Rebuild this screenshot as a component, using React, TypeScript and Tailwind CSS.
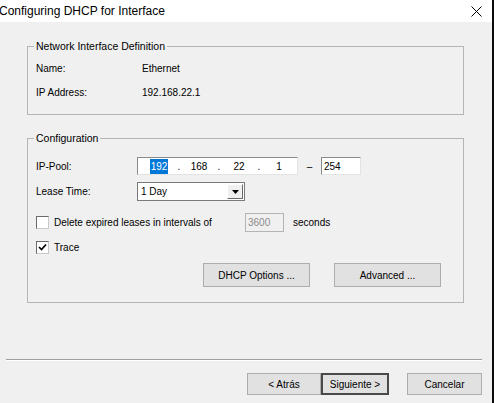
import React from "react";

const font = { fontFamily: '"Liberation Sans", Arial, sans-serif' };

function Check({ checked }: { checked?: boolean }) {
  return (
    <div className="w-[13px] h-[13px] bg-white border border-t-[#6a6a6a] border-l-[#6a6a6a] border-r-[#c8c8c8] border-b-[#c8c8c8] flex items-center justify-center shrink-0">
      {checked && (
        <svg width="9" height="9" viewBox="0 0 9 9">
          <path d="M1 4 L3.5 6.5 L8 1.5" fill="none" stroke="#000" strokeWidth="1.7" />
        </svg>
      )}
    </div>
  );
}

function Btn({ w, children, def }: { w: string; children: React.ReactNode; def?: boolean }) {
  return (
    <div
      className={
        "h-full flex items-center justify-center bg-[#e1e1e1] text-black " +
        w +
        (def ? " border-2 border-[#4a4a4a]" : " border border-[#adadad]")
      }
    >
      {children}
    </div>
  );
}

export default function App() {
  return (
    <div className="w-[494px] h-[403px] flex bg-[#f0f0f0] overflow-hidden text-[10px] text-black" style={font}>
      <div className="w-[492px] flex flex-col">
        <div className="h-[22px] bg-white flex items-center justify-between shrink-0">
          <span className="text-[12px] -ml-[1px] leading-none">Configuring DHCP for Interface</span>
          <svg width="11" height="11" viewBox="0 0 11 11" className="mr-[10px]">
            <path d="M0.5 0.5 L10.5 10.5 M10.5 0.5 L0.5 10.5" stroke="#000" strokeWidth="1" />
          </svg>
        </div>

        <fieldset className="mt-[18px] ml-[27px] w-[437px] h-[75px] border border-[#b5b5b5] px-[8px] shrink-0">
          <legend className="-ml-[2px] px-[2px] text-[10.5px] leading-[12px]">Network Interface Definition</legend>
          <div className="mt-[8px] flex h-[16px] items-center">
            <span className="w-[106px]">Name:</span>
            <span>Ethernet</span>
          </div>
          <div className="mt-[8px] flex h-[16px] items-center">
            <span className="w-[106px]">IP Address:</span>
            <span>192.168.22.1</span>
          </div>
        </fieldset>

        <fieldset className="mt-[17px] ml-[27px] w-[437px] h-[171px] border border-[#b5b5b5] px-[8px] shrink-0">
          <legend className="-ml-[2px] px-[2px] text-[10.5px] leading-[12px]">Configuration</legend>
          <div className="mt-[13px] flex h-[18px] items-center">
            <span className="w-[101px]">IP-Pool:</span>
            <div className="w-[161px] h-[18px] bg-white border border-t-[#8a8a8a] border-l-[#8a8a8a] border-r-[#e3e3e3] border-b-[#e3e3e3] flex items-center pl-[5px]">
              <span className="w-[32px] flex justify-center"><span className="bg-[#0078d7] text-white px-[1px]">192</span></span>
              <span className="w-[8px] text-center">.</span>
              <span className="w-[32px] text-center">168</span>
              <span className="w-[8px] text-center">.</span>
              <span className="w-[32px] text-center">22</span>
              <span className="w-[8px] text-center">.</span>
              <span className="w-[32px] text-center">1</span>
            </div>
            <span className="w-[23px] text-center">–</span>
            <div className="w-[40px] h-[18px] bg-white border border-t-[#8a8a8a] border-l-[#8a8a8a] border-r-[#e3e3e3] border-b-[#e3e3e3] flex items-center pl-[2px]">
              254
            </div>
          </div>
          <div className="mt-[7px] flex h-[19px] items-center">
            <span className="w-[101px]">Lease Time:</span>
            <div className="w-[108px] h-[19px] bg-white border border-[#7a7a7a] flex items-center justify-between">
              <span className="pl-[3px]">1 Day</span>
              <div className="w-[16px] h-[15px] mr-[1px] bg-[#f0f0f0] border border-t-[#ffffff] border-l-[#ffffff] border-r-[#6a6a6a] border-b-[#6a6a6a] flex items-center justify-center">
                <svg width="7" height="4" viewBox="0 0 7 4"><path d="M0 0 H7 L3.5 4 Z" fill="#000" /></svg>
              </div>
            </div>
          </div>
          <div className="mt-[12px] flex h-[19px] items-center">
            <Check />
            <span className="ml-[5px] w-[191px]">Delete expired leases in intervals of</span>
            <div className="w-[39px] h-[19px] bg-[#f0f0f0] border border-[#b4b4b4] flex items-center pl-[2px] text-[#8c8c8c]">
              3600
            </div>
            <span className="ml-[9px]">seconds</span>
          </div>
          <div className="mt-[8px] flex h-[14px] items-center">
            <Check checked />
            <span className="ml-[5px]">Trace</span>
          </div>
          <div className="mt-[9px] flex h-[24px] pl-[167px] gap-[24px]">
            <Btn w="w-[107px]">DHCP Options ...</Btn>
            <Btn w="w-[107px]">Advanced ...</Btn>
          </div>
        </fieldset>

        <div className="mt-[56px] ml-[6px] w-[476px] h-[2px] border-t border-t-[#a0a0a0] border-b border-b-white shrink-0" />

        <div className="mt-[12px] ml-[247px] flex h-[22px] shrink-0">
          <Btn w="w-[74px]">&lt; Atrás</Btn>
          <Btn w="w-[68px]" def>Siguiente &gt;</Btn>
          <div className="ml-[18px] h-full">
            <Btn w="w-[75px]">Cancelar</Btn>
          </div>
        </div>
      </div>
      <div className="w-[2px] h-full bg-[#0a0a0a]" />
    </div>
  );
}
